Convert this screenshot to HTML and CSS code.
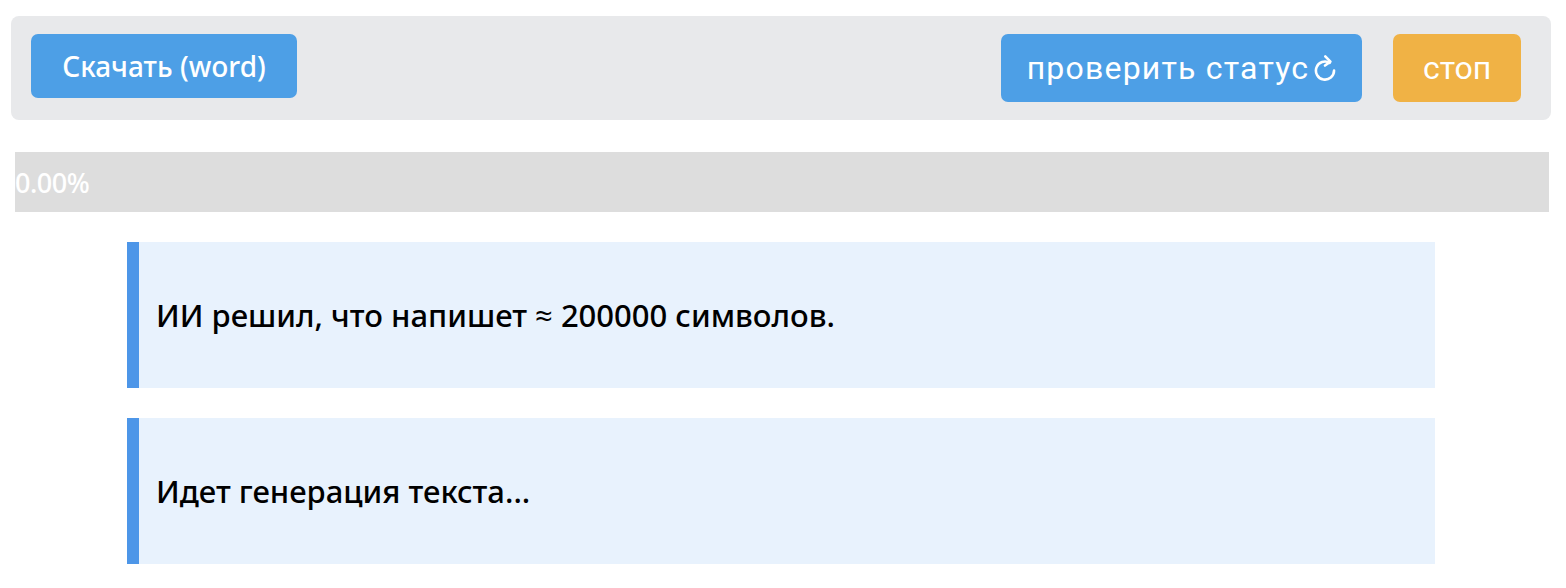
FILE: index.html
```html
<!DOCTYPE html>
<html lang="ru">
<head>
    <meta charset="UTF-8">
    <meta name="viewport" content="width=device-width, initial-scale=1.0">
    <title>Генерация текста</title>
    <link rel="stylesheet" href="styles.css">
</head>
<body>

    <div class="toolbar">
        <button class="btn download">Скачать (word)</button>
        <div class="right">
            <button class="btn status">проверить статус
                <svg class="refresh" viewBox="3.5 1 17 21" width="22" height="28">
                    <path d="M19 13.5a7 7 0 1 1-3.4-6" fill="none" stroke="white" stroke-width="2" stroke-linecap="round"/>
                    <path d="M12.2 2.5l4 4.1-4.2 3" fill="none" stroke="white" stroke-width="2" stroke-linecap="round" stroke-linejoin="round"/>
                </svg>
            </button>
            <button class="btn stop">стоп</button>
        </div>
    </div>

    <div class="progress">
        <div class="progress-label">0.00%</div>
    </div>

    <div class="messages">
        <div class="message"><p>ИИ решил, что напишет ≈ 200000 символов.</p></div>
        <div class="message"><p>Идет генерация текста...</p></div>
    </div>

</body>
</html>
```

FILE: styles.css
```css
body {
    margin: 16px 15px 0 11px;
    font-family: "Noto Sans", "Open Sans", sans-serif;
    background: #fff;
}
.toolbar {
    display: flex;
    justify-content: space-between;
    align-items: flex-start;
    background-color: #e8e9eb;
    border-radius: 8px;
    padding: 18px 30px 18px 20px;
    height: 68px;
}
.right {
    display: flex;
    gap: 31px;
}
.btn {
    border: none;
    border-radius: 7px;
    color: white;
    cursor: pointer;
    margin: 0;
    padding: 0;
}
.download {
    background-color: #4d9fe6;
    height: 64px;
    width: 266px;
    font-family: "Noto Sans", sans-serif;
    font-weight: 500;
    font-size: 28px;
}
.status, .stop {
    height: 68px;
    font-family: Roboto, sans-serif;
    font-size: 32px;
}
.status {
    background-color: #4d9fe6;
    width: 361px;
    display: flex;
    align-items: center;
    justify-content: center;
    gap: 5px;
    letter-spacing: 1.2px;
}
.stop {
    background-color: #f0b245;
    width: 128px;
}
.progress {
    background-color: #dddddd;
    height: 60px;
    margin: 32px 2px 0 4px;
    display: flex;
    align-items: center;
}
.progress-label {
    color: white;
    font-size: 27px;
    font-weight: 500;
    letter-spacing: -0.5px;
}
.messages {
    width: 1308px;
    margin: 30px 0 0 116px;
}
.message {
    background-color: #e8f2fd;
    border-left: 12px solid #4d96e8;
    height: 146px;
    margin-bottom: 30px;
    display: flex;
    align-items: center;
    padding-left: 17px;
    box-sizing: border-box;
}
.message p {
    margin: 0;
    font-size: 31px;
    font-weight: 500;
    color: #000;
}
```
